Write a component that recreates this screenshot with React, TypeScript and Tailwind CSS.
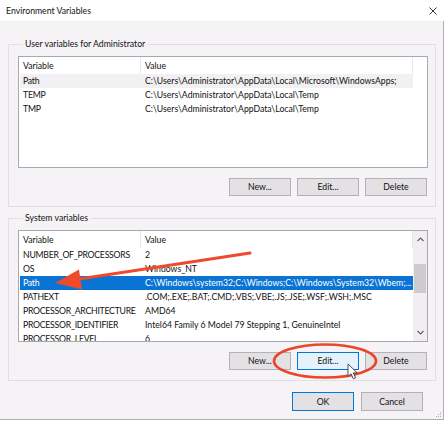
import React from 'react';

type Row = { name: string; value: string };

const userVars: Row[] = [
  { name: 'Path', value: 'C:\\Users\\Administrator\\AppData\\Local\\Microsoft\\WindowsApps;' },
  { name: 'TEMP', value: 'C:\\Users\\Administrator\\AppData\\Local\\Temp' },
  { name: 'TMP', value: 'C:\\Users\\Administrator\\AppData\\Local\\Temp' },
];

const systemVars: Row[] = [
  { name: 'NUMBER_OF_PROCESSORS', value: '2' },
  { name: 'OS', value: 'Windows_NT' },
  { name: 'Path', value: 'C:\\Windows\\system32;C:\\Windows;C:\\Windows\\System32\\Wbem;...' },
  { name: 'PATHEXT', value: '.COM;.EXE;.BAT;.CMD;.VBS;.VBE;.JS;.JSE;.WSF;.WSH;.MSC' },
  { name: 'PROCESSOR_ARCHITECTURE', value: 'AMD64' },
  { name: 'PROCESSOR_IDENTIFIER', value: 'Intel64 Family 6 Model 79 Stepping 1, GenuineIntel' },
  { name: 'PROCESSOR_LEVEL', value: '6' },
];

const Chevron = ({ up }: { up?: boolean }) => (
  <svg width="7" height="5" viewBox="0 0 7 5">
    <path d={up ? 'M0.5 4 L3.5 1 L6.5 4' : 'M0.5 1 L3.5 4 L6.5 1'} fill="none" stroke="#606060" strokeWidth="1.1" />
  </svg>
);

const Scrollbar = () => (
  <div className="w-[14px] shrink-0 bg-[#f0eef0] flex flex-col">
    <div className="h-[17px] flex items-center justify-center">
      <Chevron up />
    </div>
    <div className="flex-1 px-px pt-[16px]">
      <div className="h-[29px] bg-[#cdcbce]" />
    </div>
    <div className="h-[17px] flex items-center justify-center">
      <Chevron />
    </div>
  </div>
);

interface ListProps {
  rows: Row[];
  selected?: number;
  hovered?: number;
  scroll?: boolean;
}

const VarList: React.FC<ListProps> = ({ rows, selected, hovered, scroll }) => (
  <div className="h-[112px] w-[410px] border border-[#a9a8ae] bg-white overflow-hidden flex">
    <div className="w-[394px] pl-px flex flex-col shrink-0">
      <div className="h-[17px] flex shrink-0">
        <div className="w-[121px] border-r border-[#e8e6ea] pl-[3px] flex items-center">Variable</div>
        <div className="flex-1 border-r border-[#e8e6ea] pl-[4px] flex items-center">Value</div>
      </div>
      {rows.map((r, i) => (
        <div
          key={r.name + i}
          className={`h-[14px] flex shrink-0 items-center whitespace-nowrap ${
            i === selected ? 'bg-[#0a74d4] text-white' : i === hovered ? 'bg-[#f2f0f3]' : ''
          }`}
        >
          <div className="w-[121px] pl-[3px] shrink-0 tracking-[-0.25px]">{r.name}</div>
          <div className="flex-1 pl-[4px] overflow-hidden">{r.value}</div>
        </div>
      ))}
    </div>
    {scroll ? <Scrollbar /> : <div className="flex-1" />}
  </div>
);

interface BtnProps {
  children: React.ReactNode;
  active?: boolean;
  primary?: boolean;
  tall?: boolean;
}

const Btn: React.FC<BtnProps> = ({ children, active, primary, tall }) => (
  <div
    className={`w-[62px] flex items-center justify-center border ${tall ? 'h-[19px]' : 'h-[18px]'} ${
      active
        ? 'bg-[#e5f1fb] border-[#0078d7]'
        : primary
        ? 'bg-[#e3e1e4] border-[#0078d7]'
        : 'bg-[#e3e1e4] border-[#b4b2b6]'
    }`}
  >
    {children}
  </div>
);

const GroupBox: React.FC<{ title: string; children: React.ReactNode }> = ({ title, children }) => (
  <div className="ml-[8px] w-[428px] border border-[#e1dfe3] pl-[9px] pb-[10px]">
    <div className="-mt-[7px] ml-[5px] px-[2px] w-fit leading-[12px] bg-[#f5f3f6]">{title}</div>
    {children}
  </div>
);

const Overlay = () => {
  // arrow pointing to the selected Path row, ring around the Edit button
  const tip = { x: 55, y: 283 };
  return (
    <svg className="absolute left-0 top-0 pointer-events-none" width="445" height="421" viewBox="0 0 445 421">
      <line x1="250" y1="253" x2="76" y2="279.5" stroke="#ee4a2c" strokeWidth="3" strokeLinecap="round" />
      <polygon points={`${tip.x},${tip.y} 79,269.5 82,289.5`} fill="#ee4a2c" />
      <ellipse cx="325" cy="361" rx="51" ry="16.5" fill="none" stroke="#e9472b" strokeWidth="2.6" />
      <path
        d="M348 364 L348 376.5 L351 373.8 L353.4 378.8 L355.6 377.8 L353.3 372.9 L357.3 372.9 Z"
        fill="#ffffff"
        stroke="#3a3a3a"
        strokeWidth="0.9"
        strokeLinejoin="round"
      />
    </svg>
  );
};

export default function App() {
  return (
    <div className="relative w-[445px] h-[421px] bg-white overflow-hidden text-[8.7px] leading-[12px] text-[#111] font-['Lato',sans-serif]">
      <div className="h-[21px] flex items-center justify-between pl-[6px] pr-[8px] bg-white">
        <span>Environment Variables</span>
        <svg width="8" height="8" viewBox="0 0 8 8">
          <path d="M0.5 0.5 L7.5 7.5 M7.5 0.5 L0.5 7.5" stroke="#222" strokeWidth="0.9" />
        </svg>
      </div>
      <div className="w-[444px] h-[399px] bg-[#f5f3f6] border-r border-b border-[#aeacb0] pt-[23px] flex flex-col">
        <GroupBox title="User variables for Administrator">
          <div className="mt-[6px]">
            <VarList rows={userVars} hovered={0} />
          </div>
          <div className="mt-[10px] w-[410px] pr-px flex justify-end gap-[6px]">
            <Btn>New...</Btn>
            <Btn>Edit...</Btn>
            <Btn>Delete</Btn>
          </div>
        </GroupBox>
        <div className="mt-[11px]">
          <GroupBox title="System variables">
            <div className="mt-[6px]">
              <VarList rows={systemVars} selected={2} scroll />
            </div>
            <div className="mt-[10px] w-[410px] pr-px flex justify-end gap-[6px]">
              <Btn>New...</Btn>
              <Btn active>Edit...</Btn>
              <Btn>Delete</Btn>
            </div>
          </GroupBox>
        </div>
        <div className="mt-[11px] pr-[20px] flex justify-end gap-[7px]">
          <Btn primary tall>OK</Btn>
          <Btn tall>Cancel</Btn>
        </div>
        <div className="flex-1 flex justify-end items-end pr-[1px] pb-[1px]">
          <svg width="6" height="6" viewBox="0 0 6 6">
            <rect x="4" y="0" width="1" height="1" fill="#b0b0b0" />
            <rect x="2" y="2" width="1" height="1" fill="#b0b0b0" />
            <rect x="4" y="2" width="1" height="1" fill="#b0b0b0" />
            <rect x="0" y="4" width="1" height="1" fill="#b0b0b0" />
            <rect x="2" y="4" width="1" height="1" fill="#b0b0b0" />
            <rect x="4" y="4" width="1" height="1" fill="#b0b0b0" />
          </svg>
        </div>
      </div>
      <Overlay />
    </div>
  );
}
